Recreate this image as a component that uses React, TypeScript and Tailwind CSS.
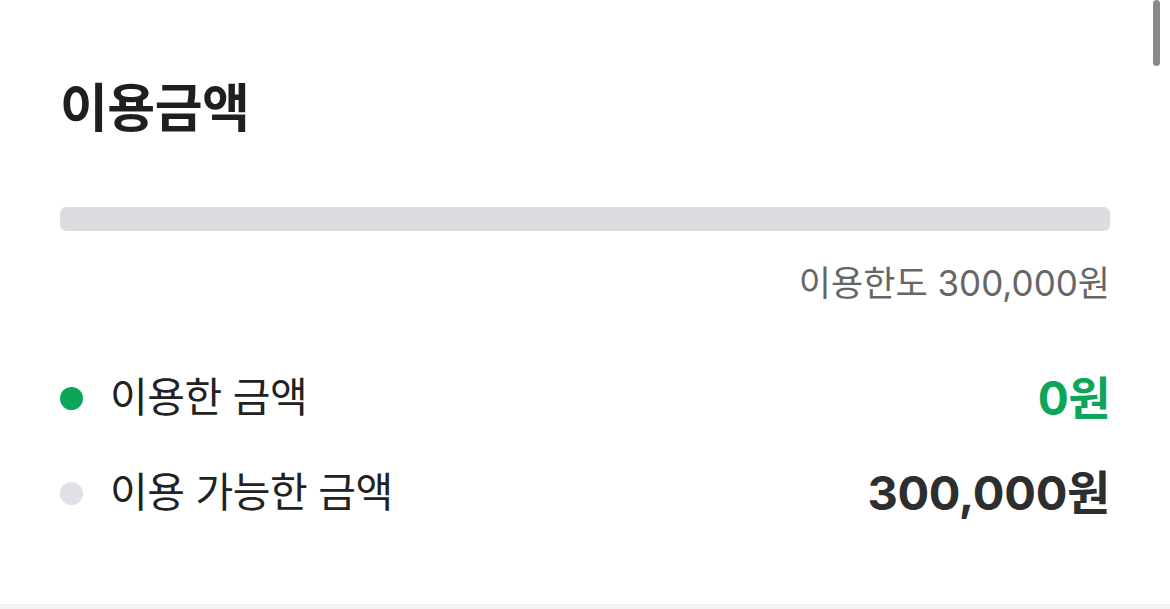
export default function App() {
  return (
    <div
      className="relative w-[1170px] h-[609px] overflow-hidden bg-white flex flex-col"
      style={{ fontFamily: "Inter, 'Noto Sans CJK KR', sans-serif" }}
    >
      {/* scrollbar thumb */}
      <div className="absolute right-[10px] top-0 w-[7px] h-[66px] rounded-full bg-[#8a8a8a]" />

      <section className="flex-1 px-[60px] pt-[74px]">
        <h2 className="text-[52px] font-bold leading-[70px] tracking-[-0.5px] text-[#1f1f1f]">이용금액</h2>

        <div className="mt-[63px] h-[24px] w-full rounded-[6px] bg-[#dcdde0]" />

        <div className="mt-[28px] text-right text-[35px] leading-[48px] text-[#666666]">
          이용한도 300,000원
        </div>

        <div className="mt-[66px] flex flex-col gap-[45px]">
          <div className="flex items-center justify-between h-[50px]">
            <div className="flex items-center gap-[27px]">
              <span className="w-[23px] h-[23px] rounded-full bg-[#0ca65a]" />
              <span className="text-[41px] tracking-[-0.5px] text-[#222222]">이용한 금액</span>
            </div>
            <span className="text-[46px] font-bold tracking-[-0.5px] text-[#0ca65a]">0원</span>
          </div>
          <div className="flex items-center justify-between h-[50px]">
            <div className="flex items-center gap-[27px]">
              <span className="w-[23px] h-[23px] rounded-full bg-[#dfe1e7]" />
              <span className="text-[41px] tracking-[-0.5px] text-[#222222]">이용 가능한 금액</span>
            </div>
            <span className="text-[47px] font-bold tracking-[-0.3px] text-[#2e2e2e]">300,000원</span>
          </div>
        </div>
      </section>

      <div className="h-[5px] bg-[#f2f3f5] border-t border-[#eceef1]" />
    </div>
  );
}
